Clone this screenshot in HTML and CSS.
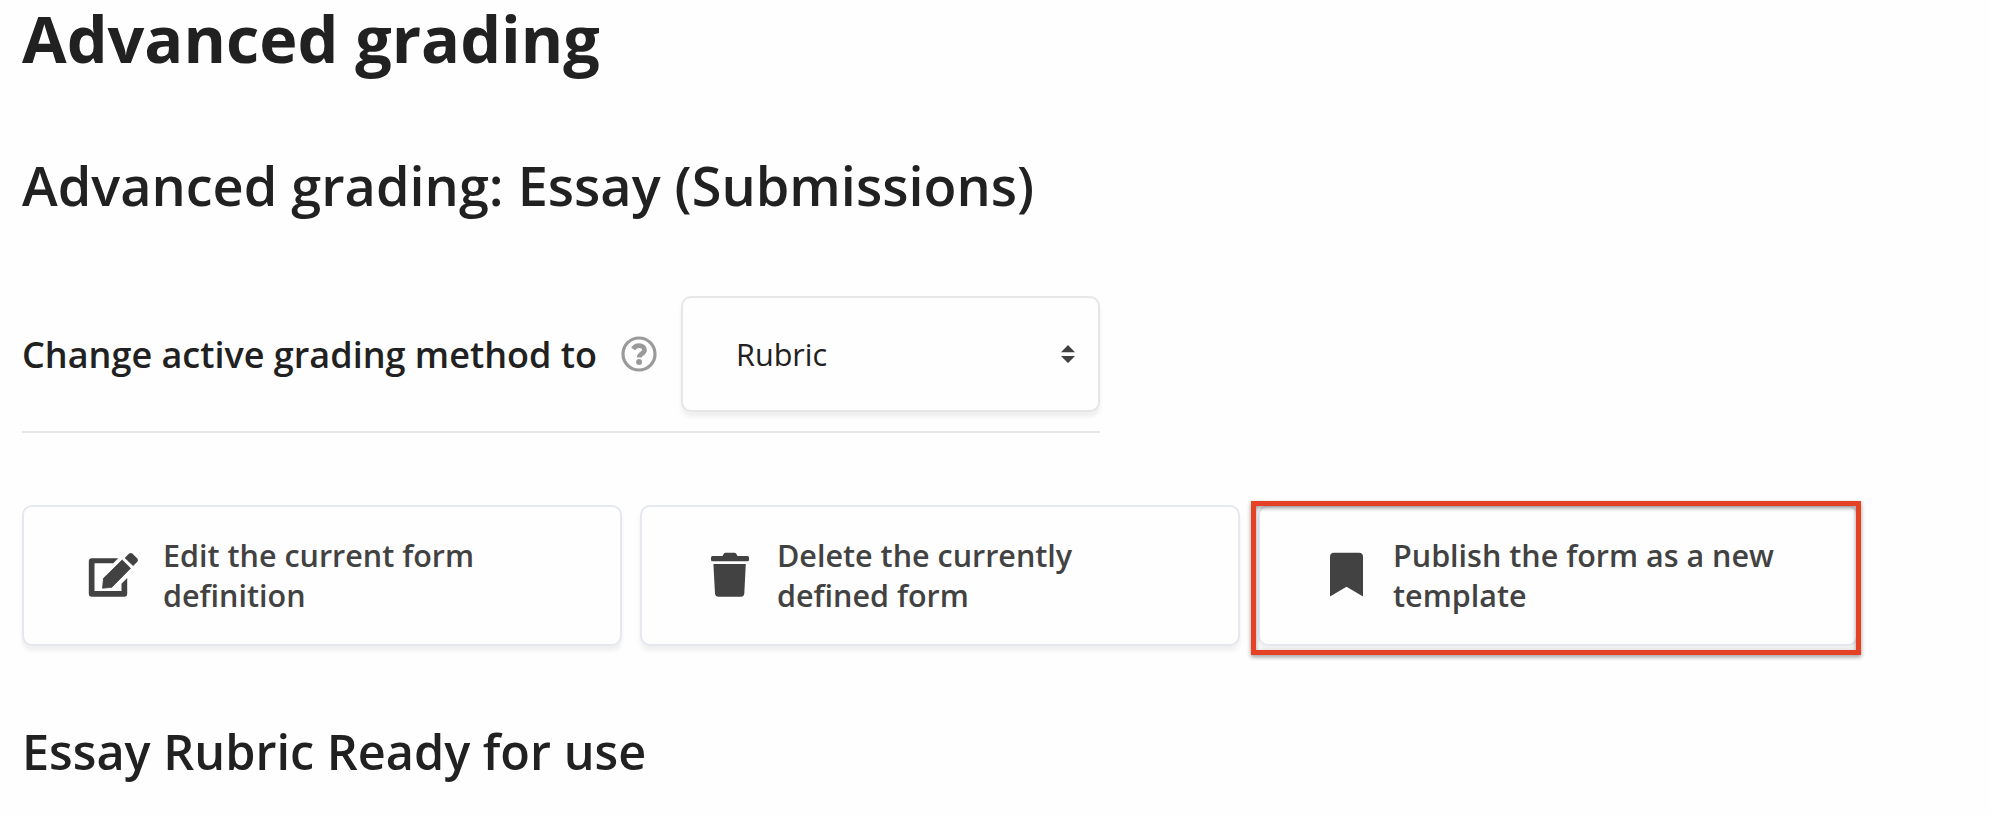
FILE: index.html
```
<!DOCTYPE html>
<html lang="en">
<head>
    <meta charset="UTF-8">
    <meta name="viewport" content="width=device-width, initial-scale=1.0">
    <title>Advanced grading</title>
    <link rel="stylesheet" href="styles.css">
</head>
<body>
    <div class="container">
        <h1>Advanced grading</h1>
        <h2>Advanced grading: Essay (Submissions)</h2>

        <div class="method-row">
            <label for="method">Change active grading method to</label>
            <svg class="help-icon" viewBox="0 0 36 36">
                <circle cx="18" cy="18" r="16" fill="none" stroke="currentColor" stroke-width="3.2"/>
                <path d="M12.2 13C13.6 10.8 15.4 9.7 18.2 9.7c3 0 5.3 1.9 5.3 4.3 0 3.8-5.3 3.8-5.3 7.6" fill="none" stroke="currentColor" stroke-width="4.8"/>
                <circle cx="18.1" cy="26" r="3" fill="currentColor"/>
            </svg>
            <div class="select-wrap">
                <select id="method">
                    <option selected>Rubric</option>
                    <option>Marking guide</option>
                </select>
                <svg class="select-arrows" viewBox="0 0 14 18">
                    <path d="M7 0l7 7.3H0zM7 18l7-7.1H0z" fill="currentColor"/>
                </svg>
            </div>
        </div>

        <div class="actions">
            <a class="action">
                <svg class="icon-edit" viewBox="0 0 50 44" fill="currentColor">
                    <path d="M29.7 5.3H3.3a3 3 0 0 0-3 3v32.4a3 3 0 0 0 3 3h32.4a3 3 0 0 0 3-3V25L33 30.7V38H6V10.3h18.7z"/>
                    <path d="M33.7 7l8.3 8.3-18.7 19-9.3.9 1-9.9z" stroke="currentColor" stroke-width="0.8" stroke-linejoin="round"/>
                    <path d="M36.2 5L40.6.6q1.6-1.4 3.2 0l5 5q1.4 1.6 0 3.2L44.6 13z"/>
                </svg>
                <span>Edit the current form definition</span>
            </a>
            <a class="action">
                <svg class="icon-trash" viewBox="0 0 47 44" fill="currentColor">
                    <path d="M5 4.5Q5 3 6.5 3h10L17.6.9q.6-1.2 2-1.2h8.8q1.4 0 2 1.2L31.5 3h10Q43 3 43 4.5v2.3q0 1.5-1.5 1.5h-35Q5 8.3 5 6.8z"/>
                    <path d="M7.4 11h32.4L38.3 40.6q-.2 3.1-3.3 3.1H12.3q-3.1 0-3.3-3.1z"/>
                </svg>
                <span>Delete the currently defined form</span>
            </a>
            <a class="action highlighted">
                <svg class="icon-bookmark" viewBox="0 0 45 44" fill="currentColor">
                    <path d="M6 3.7q0-4 4-4h25q4 0 4 4v39.8L22.5 33.7 6 43.5z"/>
                </svg>
                <span>Publish the form as a new template</span>
            </a>
        </div>

        <h3>Essay Rubric Ready for use</h3>
    </div>
</body>
</html>
```
FILE: styles.css
```
*,
*::after {
    box-sizing: border-box;
}
body {
    margin: 0;
    font-family: "Open Sans", sans-serif;
    background-color: #fefefe;
    color: #212121;
}
.container {
    padding: 0 22px;
}
h1 {
    margin: 0 0 73px;
    font-size: 64.7px;
    font-weight: 700;
    line-height: 76px;
}
h2 {
    margin: 0 0 75px;
    font-size: 54px;
    font-weight: 600;
    line-height: 72px;
}
h3 {
    margin: 0;
    font-size: 48.6px;
    font-weight: 600;
    line-height: 70px;
}
.method-row {
    display: flex;
    align-items: center;
    width: 1078px;
    padding-bottom: 19px;
    margin-bottom: 72px;
    border-bottom: 2px solid #e6e6e6;
}
.method-row label {
    font-size: 36px;
    font-weight: 600;
    white-space: nowrap;
}
.help-icon {
    width: 36px;
    height: 36px;
    margin-left: auto;
    margin-right: 24px;
    color: #9a9a9a;
}
.select-wrap {
    position: relative;
    width: 419px;
    height: 116px;
}
select {
    appearance: none;
    width: 100%;
    height: 100%;
    padding: 0 53px;
    border: 2px solid #e6e6e6;
    border-radius: 10px;
    background-color: #fefefe;
    box-shadow: 0 5px 4px rgba(0,0,0,0.06);
    color: #212121;
    font-family: inherit;
    font-size: 30.6px;
}
.select-arrows {
    position: absolute;
    top: 49px;
    right: 25px;
    width: 14px;
    height: 18px;
    color: #404040;
}
.actions {
    display: flex;
    gap: 18px;
    margin-bottom: 70px;
}
.action {
    position: relative;
    display: flex;
    align-items: center;
    gap: 24px;
    width: 600px;
    height: 141px;
    padding: 0 70px 0 64px;
    border: 2px solid #e6e8f0;
    border-radius: 10px;
    background-color: #fefefe;
    box-shadow: 0 5px 4px rgba(0,0,0,0.06);
    color: #424242;
    font-size: 30.5px;
    font-weight: 600;
    line-height: 40px;
}
.action span {
    margin-bottom: 2px;
}
.action svg {
    flex: none;
    height: 44px;
    margin-bottom: 1px;
    overflow: visible;
}
.icon-edit {
    width: 51px;
}
.icon-trash {
    width: 47px;
}
.icon-bookmark {
    width: 45px;
}
/* red frame around the publish action */
.highlighted::after {
    content: "";
    position: absolute;
    top: -6px;
    left: -9px;
    width: 610px;
    height: 154px;
    border: 5px solid #e54225;
    filter: drop-shadow(0 2px 2px rgba(0,0,0,0.4));
}
```
